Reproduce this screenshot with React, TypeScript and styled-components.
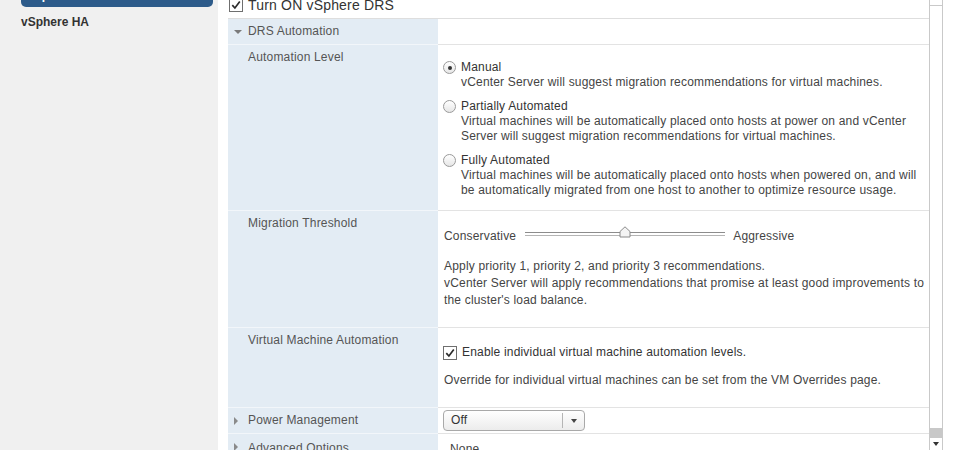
import React from "react";
import styled, { createGlobalStyle } from "styled-components";

const GlobalStyle = createGlobalStyle`
  html, body {
    margin: 0;
    padding: 0;
    background: #fff;
  }
  body {
    font-family: "Liberation Sans", Arial, sans-serif;
    font-size: 12px;
    letter-spacing: 0.18px;
    color: #333;
  }
`;

const Page = styled.div`
  display: flex;
  width: 956px;
  height: 450px;
  overflow: hidden;
  background: #fff;
`;

const Sidebar = styled.nav`
  width: 218px;
  flex-shrink: 0;
  background: #f0f0f0;
  padding: 0 5px 0 21px;
  box-sizing: border-box;
`;

const NavItem = styled.div<{ $active?: boolean }>`
  height: 24px;
  display: flex;
  align-items: center;
  padding-left: ${(p) => (p.$active ? "6px" : "0")};
  font-weight: bold;
  font-size: 12px;
  letter-spacing: 0;
  color: ${(p) => (p.$active ? "#fff" : "#333")};
  background: ${(p) => (p.$active ? "#2d5b8a" : "transparent")};
  border-radius: ${(p) => (p.$active ? "0 0 5px 5px" : "0")};
  margin-top: ${(p) => (p.$active ? "-17px" : "3px")};
`;

const Pane = styled.div`
  width: 725px;
  flex-shrink: 0;
  display: flex;
  border-right: 1px solid #c9c9c9;
  box-sizing: border-box;
`;

const Content = styled.div`
  flex: 1;
  padding-left: 10px;
  overflow: hidden;
`;

const Scrollbar = styled.div`
  width: 12px;
  border-left: 1px solid #c9c9c9;
  display: flex;
  flex-direction: column;
  background: #fff;
`;

const ScrollButton = styled.div<{ $down?: boolean }>`
  height: ${(p) => (p.$down ? "12px" : "5px")};
  border-bottom: ${(p) => (p.$down ? "none" : "1px solid #c9c9c9")};
  display: flex;
  align-items: center;
  justify-content: center;
  &::after {
    content: "";
    display: ${(p) => (p.$down ? "block" : "none")};
    border-left: 3px solid transparent;
    border-right: 3px solid transparent;
    border-top: 4px solid #333;
  }
`;

const ScrollTrack = styled.div`
  flex: 1;
  display: flex;
  flex-direction: column;
  justify-content: flex-end;
`;

const ScrollThumb = styled.div`
  height: 10px;
  background: #c8c8c8;
`;

const TopRow = styled.div`
  height: 18px;
  margin-top: -4px;
  margin-bottom: 4px;
  display: flex;
  align-items: center;
  gap: 5px;
  padding-left: 1px;
  font-size: 14px;
  color: #333;
`;

const CheckBox = styled.span`
  width: 12px;
  height: 12px;
  border: 1px solid #6f6f6f;
  background: #fff;
  display: inline-flex;
  align-items: center;
  justify-content: center;
  flex-shrink: 0;
  svg {
    display: block;
  }
`;

const Table = styled.div`
  border-top: 1px solid #dedede;
`;

const Row = styled.div`
  display: grid;
  grid-template-columns: 210px 1fr;
`;

const LabelCell = styled.div<{ $h: number; $pt?: number }>`
  height: ${(p) => p.$h}px;
  box-sizing: border-box;
  background: #e3ecf4;
  border-bottom: 1px solid #f2f6fa;
  padding: ${(p) => p.$pt ?? 5}px 0 0 20px;
  line-height: 15px;
  color: #555;
  position: relative;
  display: flex;
  align-items: flex-start;
`;

const ValueCell = styled.div<{ $pt?: number }>`
  box-sizing: border-box;
  border-bottom: 1px solid #e3e3e3;
  padding: ${(p) => p.$pt ?? 0}px 0 0 5px;
  line-height: 15px;
  color: #444;
  white-space: nowrap;
`;

const Caret = styled.span<{ $open?: boolean }>`
  position: absolute;
  left: 6px;
  top: ${(p) => (p.$open ? "11px" : "9px")};
  width: 0;
  height: 0;
  ${(p) =>
    p.$open
      ? `border-left: 4px solid transparent;
         border-right: 4px solid transparent;
         border-top: 4px solid #7a7a7a;`
      : `border-top: 4px solid transparent;
         border-bottom: 4px solid transparent;
         border-left: 4px solid #8a8a8a;`}
`;

const OptionList = styled.div`
  display: flex;
  flex-direction: column;
  gap: 9px;
`;

const Option = styled.div`
  display: flex;
  gap: 5px;
`;

const Radio = styled.span<{ $checked?: boolean }>`
  width: 11px;
  height: 11px;
  margin-top: 1px;
  border: 1px solid #9a9a9a;
  border-radius: 50%;
  background: linear-gradient(#ffffff, #e6e6e6);
  flex-shrink: 0;
  display: flex;
  align-items: center;
  justify-content: center;
  &::after {
    content: "";
    display: ${(p) => (p.$checked ? "block" : "none")};
    width: 4px;
    height: 4px;
    border-radius: 50%;
    background: #333;
  }
`;

const OptionText = styled.div`
  display: flex;
  flex-direction: column;
`;

const OptionTitle = styled.div`
  color: #333;
`;

const SliderRow = styled.div`
  display: flex;
  align-items: center;
  height: 18px;
  padding-left: 1px;
  color: #444;
`;

const Track = styled.div`
  position: relative;
  width: 200px;
  height: 2px;
  margin: -5px 8px 0 9px;
  border-top: 1px solid #8c8c8c;
  border-bottom: 1px solid #b5b5b5;
  background: #fff;
`;

const Thumb = styled.svg`
  position: absolute;
  left: 94px;
  top: -7px;
`;

const Paragraph = styled.p<{ $lh?: number; $mt?: number; $pl?: number }>`
  margin: ${(p) => p.$mt ?? 0}px 0 0 0;
  padding-left: ${(p) => p.$pl ?? 1}px;
  line-height: ${(p) => p.$lh ?? 15}px;
  color: #444;
`;

const CheckLine = styled.div`
  display: flex;
  align-items: center;
  gap: 5px;
  color: #333;
`;

const Dropdown = styled.div`
  width: 142px;
  height: 21px;
  box-sizing: border-box;
  border: 1px solid #a9a9a9;
  border-radius: 4px;
  background: linear-gradient(#ffffff, #ececec);
  display: flex;
  align-items: center;
  color: #333;
`;

const DropValue = styled.span`
  flex: 1;
  padding-left: 7px;
`;

const DropArrow = styled.span`
  width: 21px;
  height: 15px;
  border-left: 1px solid #b5b5b5;
  display: flex;
  align-items: center;
  justify-content: center;
  &::after {
    content: "";
    border-left: 3px solid transparent;
    border-right: 3px solid transparent;
    border-top: 4px solid #444;
  }
`;

const Check = () => (
  <svg width="10" height="10" viewBox="0 0 10 10">
    <path d="M1.3 5.2 L3.9 8 L8.8 1.6" fill="none" stroke="#2b2b2b" strokeWidth="1.7" />
  </svg>
);

const App = () => (
  <>
    <GlobalStyle />
    <Page>
      <Sidebar>
        <NavItem $active>vSphere DRS</NavItem>
        <NavItem>vSphere HA</NavItem>
      </Sidebar>
      <Pane>
        <Content>
          <TopRow>
            <CheckBox>
              <Check />
            </CheckBox>
            Turn ON vSphere DRS
          </TopRow>
          <Table>
            <Row>
              <LabelCell $h={26} $pt={5}>
                <Caret $open />
                DRS Automation
              </LabelCell>
              <ValueCell />
            </Row>
            <Row>
              <LabelCell $h={166} $pt={5}>
                Automation Level
              </LabelCell>
              <ValueCell $pt={15}>
                <OptionList>
                  <Option>
                    <Radio $checked />
                    <OptionText>
                      <OptionTitle>Manual</OptionTitle>
                      vCenter Server will suggest migration recommendations for virtual machines.
                    </OptionText>
                  </Option>
                  <Option>
                    <Radio />
                    <OptionText>
                      <OptionTitle>Partially Automated</OptionTitle>
                      Virtual machines will be automatically placed onto hosts at power on and vCenter
                      <br />
                      Server will suggest migration recommendations for virtual machines.
                    </OptionText>
                  </Option>
                  <Option>
                    <Radio />
                    <OptionText>
                      <OptionTitle>Fully Automated</OptionTitle>
                      Virtual machines will be automatically placed onto hosts when powered on, and will
                      <br />
                      be automatically migrated from one host to another to optimize resource usage.
                    </OptionText>
                  </Option>
                </OptionList>
              </ValueCell>
            </Row>
            <Row>
              <LabelCell $h={117} $pt={5}>
                Migration Threshold
              </LabelCell>
              <ValueCell $pt={16}>
                <SliderRow>
                  Conservative
                  <Track>
                    <Thumb width="12" height="12" viewBox="0 0 12 12">
                      <path
                        d="M6 0.8 L11 5.5 L11 11 L1 11 L1 5.5 Z"
                        fill="#f4f4f4"
                        stroke="#8a8a8a"
                        strokeWidth="1"
                      />
                    </Thumb>
                  </Track>
                  Aggressive
                </SliderRow>
                <Paragraph $lh={17} $mt={13}>
                  Apply priority 1, priority 2, and priority 3 recommendations.
                  <br />
                  vCenter Server will apply recommendations that promise at least good improvements to
                  <br />
                  the cluster's load balance.
                </Paragraph>
              </ValueCell>
            </Row>
            <Row>
              <LabelCell $h={80} $pt={5}>
                Virtual Machine Automation
              </LabelCell>
              <ValueCell $pt={17}>
                <CheckLine>
                  <CheckBox>
                    <Check />
                  </CheckBox>
                  Enable individual virtual machine automation levels.
                </CheckLine>
                <Paragraph $mt={13}>
                  Override for individual virtual machines can be set from the VM Overrides page.
                </Paragraph>
              </ValueCell>
            </Row>
            <Row>
              <LabelCell $h={26} $pt={5}>
                <Caret />
                Power Management
              </LabelCell>
              <ValueCell $pt={2}>
                <Dropdown>
                  <DropValue>Off</DropValue>
                  <DropArrow />
                </Dropdown>
              </ValueCell>
            </Row>
            <Row>
              <LabelCell $h={30} $pt={7}>
                <Caret />
                Advanced Options
              </LabelCell>
              <ValueCell $pt={8}>
                <Paragraph $pl={7}>None</Paragraph>
              </ValueCell>
            </Row>
          </Table>
        </Content>
        <Scrollbar>
          <ScrollButton />
          <ScrollTrack>
            <ScrollThumb />
          </ScrollTrack>
          <ScrollButton $down />
        </Scrollbar>
      </Pane>
    </Page>
  </>
);

export default App;
